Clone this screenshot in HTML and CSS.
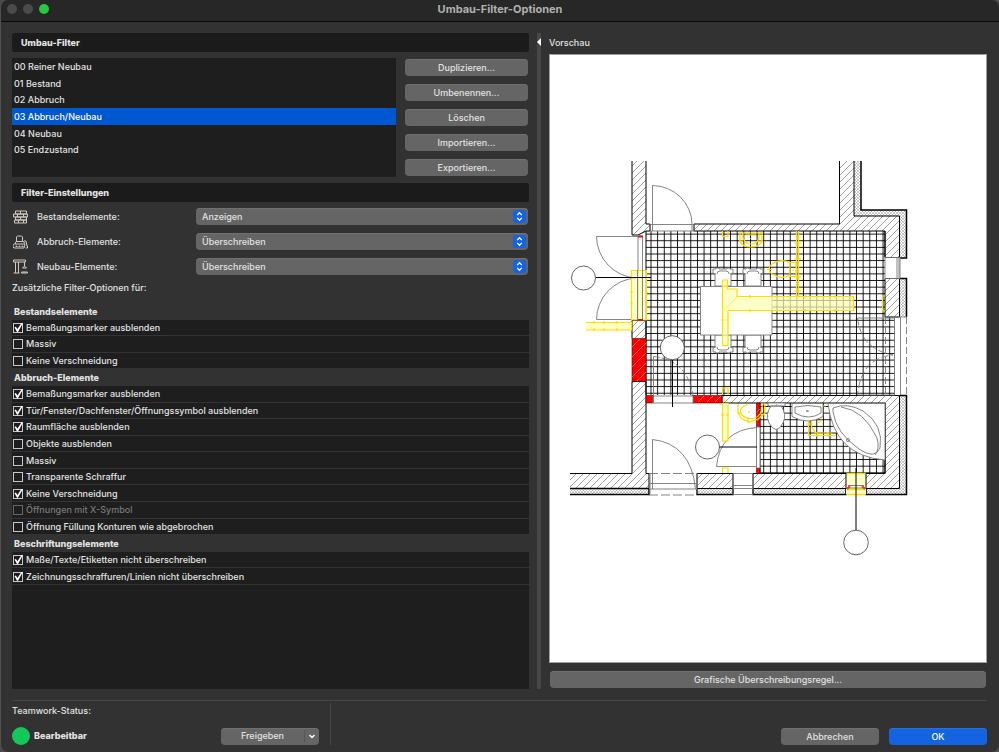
FILE: index.html
```html
<!DOCTYPE html>
<html lang="de">
<head>
<meta charset="utf-8">
<title>Umbau-Filter-Optionen</title>
<link rel="stylesheet" href="styles.css">
</head>
<body>
<div class="window">
  <header class="titlebar">
    <div class="lights"><span class="light"></span><span class="light"></span><span class="light light-zoom"></span></div>
    <h1>Umbau-Filter-Optionen</h1>
  </header>

  <main class="content">
    <section class="settings">
      <h2 class="bar">Umbau-Filter</h2>
      <div class="filters">
        <ul class="filter-list" role="listbox" aria-label="Umbau-Filter">
          <li role="option">00 Reiner Neubau</li>
          <li role="option">01 Bestand</li>
          <li role="option">02 Abbruch</li>
          <li role="option" class="selected" aria-selected="true">03 Abbruch/Neubau</li>
          <li role="option">04 Neubau</li>
          <li role="option">05 Endzustand</li>
        </ul>
        <div class="filter-actions">
          <button class="btn" type="button">Duplizieren...</button>
          <button class="btn" type="button">Umbenennen...</button>
          <button class="btn" type="button">Löschen</button>
          <button class="btn" type="button">Importieren...</button>
          <button class="btn" type="button">Exportieren...</button>
        </div>
      </div>

      <h2 class="bar">Filter-Einstellungen</h2>
      <div class="modes">
        <div class="mode">
          <svg class="mode-icon" viewBox="0 0 16 16" aria-hidden="true"><path d="M2.500 2.500h5v3h-5zM7.500 2.500h6v3h-6zM.5 5.500h4v3h-4zM4.500 5.500h6v3h-6zM10.500 5.500h4v3h-4zM2.500 8.500h5v3h-5zM7.500 8.500h6v3h-6zM1.500 11.500h4v3h-4zM5.500 11.500h5v3h-5zM10.500 11.500h3v3h-3z"/></svg>
          <label for="m1">Bestandselemente:</label>
          <span class="picker"><select id="m1"><option>Anzeigen</option><option>Überschreiben</option></select><svg viewBox="0 0 12 14" aria-hidden="true"><path d="M3.500 5.500L6 3l2.500 2.500M3.500 8.500L6 11l2.500-2.500"/></svg></span>
        </div>
        <div class="mode">
          <svg class="mode-icon" viewBox="0 0 16 16" aria-hidden="true"><path d="M3.500 8V3.500l1-1h4l1 1V8M2 10.500L3 8h7.500l1.500 2.500M1.500 10.500h10l.5 1-1 3h-10l-1-1v-2zM3 13.500v-1h1v1M6 13.500v-1h1v1M9 13.500v-1h1v1M11 7.500h2l1 5h.5v2h-2"/></svg>
          <label for="m2">Abbruch-Elemente:</label>
          <span class="picker"><select id="m2"><option>Überschreiben</option><option>Anzeigen</option></select><svg viewBox="0 0 12 14" aria-hidden="true"><path d="M3.500 5.500L6 3l2.500 2.500M3.500 8.500L6 11l2.500-2.500"/></svg></span>
        </div>
        <div class="mode">
          <svg class="mode-icon" viewBox="0 0 16 16" aria-hidden="true"><path d="M.5 1.500h12v2H.500zM2.500 3.500v11M5.500 3.500v11M.5 14.500h6M11.500 3.500v4M9.500 9.500l2-2 2 2zM8.500 13.500h6v1h-6zM11 13.500v1"/></svg>
          <label for="m3">Neubau-Elemente:</label>
          <span class="picker"><select id="m3"><option>Überschreiben</option><option>Anzeigen</option></select><svg viewBox="0 0 12 14" aria-hidden="true"><path d="M3.500 5.500L6 3l2.500 2.500M3.500 8.500L6 11l2.500-2.500"/></svg></span>
        </div>
      </div>

      <p class="hint">Zusätzliche Filter-Optionen für:</p>
      <div class="tree">
        <div class="tree-rows">
          <h3>Bestandselemente</h3>
          <label><input type="checkbox" checked>Bemaßungsmarker ausblenden</label>
          <label><input type="checkbox">Massiv</label>
          <label><input type="checkbox">Keine Verschneidung</label>
          <h3>Abbruch-Elemente</h3>
          <label><input type="checkbox" checked>Bemaßungsmarker ausblenden</label>
          <label><input type="checkbox" checked>Tür/Fenster/Dachfenster/Öffnungssymbol ausblenden</label>
          <label><input type="checkbox" checked>Raumfläche ausblenden</label>
          <label><input type="checkbox">Objekte ausblenden</label>
          <label><input type="checkbox">Massiv</label>
          <label><input type="checkbox">Transparente Schraffur</label>
          <label><input type="checkbox" checked>Keine Verschneidung</label>
          <label class="off"><input type="checkbox" disabled>Öffnungen mit X-Symbol</label>
          <label><input type="checkbox">Öffnung Füllung Konturen wie abgebrochen</label>
          <h3>Beschriftungselemente</h3>
          <label><input type="checkbox" checked>Maße/Texte/Etiketten nicht überschreiben</label>
          <label><input type="checkbox" checked>Zeichnungsschraffuren/Linien nicht überschreiben</label>
        </div>
      </div>
    </section>

    <div class="splitter" aria-hidden="true"><span class="splitter-arrow"></span></div>

    <section class="preview">
      <h2>Vorschau</h2>
      <div class="canvas">
        <svg viewBox="550 55.500 436 606" role="img" aria-label="Grundriss">
          <defs>
            <pattern id="tiles" patternUnits="userSpaceOnUse" x="647.700" y="230.800" width="6.630" height="6.630"><path d="M3.300 0v6.630M0 3.300h6.630" stroke="#000" stroke-width=".9" fill="none"/></pattern>
            <pattern id="hatch" patternUnits="userSpaceOnUse" width="7" height="7"><path d="M-1 8L8-1M-1 1L1-1M6 8l2-2" stroke="#777" stroke-width=".7" fill="none"/></pattern>
            <pattern id="insul" patternUnits="userSpaceOnUse" width="3" height="3"><path d="M0 0l3 3M3 0L0 3" stroke="#999" stroke-width=".5" fill="none"/></pattern>
            <g id="chair"><path d="M0 2h3V1h3v1h8V1h3v1h3v5h-2v12H2V7H0z" class="w"/><path d="M4 7q0-3 3-3h6q3 0 3 3M0 6l3 1M20 6l-3 1" class="g"/></g>
          </defs>

          <!-- tiled floors -->
          <path d="M646 231H885V317H895V395H646z" fill="url(#tiles)"/>
          <path d="M760 403H885V473H760z" fill="url(#tiles)"/>

          <!-- insulation -->
          <g fill="url(#insul)"><path d="M854 161h7v49h46v48h-7v-42h-46zM900 278h7v39h-7zM900 395h7v99h-41v-5h34zM570 489h79v5h-79zM697 489h36v5h-36zM753 489h93v5h-93z"/></g>
          <!-- masonry -->
          <g class="wall">
            <path d="M632 161V235H638L646 231H650V224H646V161"/>
            <path d="M839.500 161V224H694V231H885V257.500H899.500V216H854V161"/>
            <path d="M885 278.500h14.500V317H885z"/>
            <path d="M632 338.500V320.500H646V338.500"/>
            <path d="M570 473.500H632V381.500H646V473.500H649V488.500H570"/>
            <path d="M722 395.500H899.500V488.500H866V473.500H885V403H722z"/>
            <path d="M697 473.500h36v15h-36zM753 473.500h93v15h-93z"/>
          </g>
          <g class="k2"><path d="M861 161V210H906.500V258H900M900 278.500H906.500V317M900 395.500H906.500V494.500H866V489M570 494.500H649V489M570 488.500H649M697 489v5.500h36V489M753 489v5.500h93V489"/></g>
          <path class="k" d="M646 231v164M885 231v26M885 403v70.500M760 403v70"/>

          <!-- new walls -->
          <g class="red"><path d="M632 338.500h14v43h-14zM646 395.500h7v7.500h-7zM692 395.500h30v7.500h-30zM756.500 403h3.500v24h-3.500zM756.500 468h3.500v5.500h-3.500z"/></g>
          <path d="M632 347l8-8M632 357l14-14M632 367l14-14M632 377l14-14M637 381l9-9M698 402l6-6M707 402l6-6M715 402l6-6M757 412l3-3M757 421l3-3" stroke="#c77" stroke-width=".9"/>

          <!-- table and chairs -->
          <use href="#chair" x="713" y="267"/><use href="#chair" x="743" y="267"/>
          <use href="#chair" transform="translate(733 354) rotate(180)"/><use href="#chair" transform="translate(763 354) rotate(180)"/>
          <path class="w" d="M700.500 286.500h71.500V335h-71.500z"/>

          <!-- doors and windows -->
          <g class="g">
            <path d="M652.500 231V185.500A40 39 0 0 1 692 224V231M650.500 224v7M694 224v7M650 224.500h44M650 231h44"/>
            <path d="M638 236.500H596.500A42 42 0 0 0 636 278A42 42 0 0 0 596.500 319.500H638"/>
            <path class="w" d="M638 236h4.500v84H638z"/>
            <path d="M885 257.500h15v21h-15zM897 258v20M899 258v20"/>
            <path d="M894.500 317v78M900.500 317v78M885 317h22M857.500 318H895M857.500 395H895"/>
            <path stroke-dasharray="7 3" d="M906.500 317v78M885.500 317v78M857.500 318Q861 349 893 355Q861 358 857.500 395"/>
            <path d="M652.500 473V439.500Q691 444 695.500 489M649 483.500h48M649 489h48M650 473v21M697 473v21M652.500 473v16"/>
            <path stroke-dasharray="9 3" d="M649 473.500h48M649 495h48"/>
            <path class="w" d="M653 396h40v7h-40z"/>
            <path d="M653.500 403V356.500"/>
            <path stroke-dasharray="6 2" d="M653.500 356.500Q687 360 693 395"/>
            <path d="M733 473.500h20v21h-20zM733 485.500h20M733 488.500h20"/>
            <path class="w" d="M756.500 427h3.500v41h-3.500zM757 427.500Q720 430 716.500 466.500H757"/>
          </g>

          <!-- demolished parts -->
          <g class="y">
            <path class="yf" d="M631.500 270.500h15v49.500h-15zM586 322.500h45.500v7.500H586"/>
            <path class="yf" d="M722.500 280h5v9H737v7.500H853.500v14H728v35h-5.500zM722.500 403.500h5.500v37.500h-5.500z"/>
            <path d="M722.500 395v-7h5.500v7M885 296h-2.500v15h2.500"/>
            <path d="M722.500 231v5.500h5.500V231M722.500 473v-5h5.500v5"/>
            <path stroke-width=".6" d="M724 310L737 297"/>
            <path d="M796.500 231v65M798.500 231v65M794 243h7M794 259h7M794 277h7M794 291h7"/>
            <path d="M740 232v9q2 6 11 6t11-6v-9M743 233v5q2 6 8 6t8-6v-5M740 233h23M743 241h-4M763 241h-4M751 238v1M746 235h10"/>
            <path d="M790 262.500v14h6v-14zM790 263q-9-5-18 1-6 5 0 10 9 6 18 1M767 269.500h5M794 270h-2"/>
            <path d="M738 404v9l4 6 8 3 8-3 7-6v-9h-4M748 404q-10 4-7 10 5 6 14 4 8-4 7-13M749 411v2M737 413h5M748 419v4"/>
            <path d="M808.500 421v14.500H836M811.500 421v6l4 6H832M806 424h7M817 432v5M828 432v5M822 420l-4 3M826 406h-4"/>
            <path d="M594 321v3M604 321v3M617 321v3M594 328v3M604 328v3M617 328v3M630 292h3M630 303h3M645 292h3M645 303h3M750 295v3M777 295v3M805 295v3M835 295v3M750 309v3M777 309v3M805 309v3M835 309v3M721 320h3M726 320h3M721 415h3M726 415h3"/>
          </g>
          <path class="g" d="M637.500 270v50M642.500 270v50"/>
          <path fill="#e01020" d="M638 235.500h5v2h-5zM638 319h5v2h-5z"/>

          <!-- bathroom fixtures -->
          <g class="g">
            <path class="w" d="M768 403h17v3h-17zM771 406q-6 8-2 17 7 13 14 0 4-9-2-17z"/><path d="M776 405h1"/>
            <path class="w" d="M792 403.500h31v13q-15 9-31 0z"/><path d="M795 407q13-3 26 0v6q-12 8-26 0zM807 410v2M806 411h3"/>
            <path class="w" d="M828 403.500H885V460Q834 456 828 403.500z"/>
            <path d="M833 408Q847 402 863 411 884 425 880 448 875 460 859 449 836 433 833 412zM841 407Q864 410 877 438 880 449 875 455M844 420"/><circle cx="848" cy="440" r="1.500"/>
          </g>
          <!-- lower right window -->
          <path fill="#ffffc8" d="M846 473.500h20v21h-20z"/>
          <path d="M846 473.500h20M847 489.500h18M847 494.500h18" stroke="#fd0" stroke-width="1.500"/>
          <path class="g" d="M846.500 473v16M865.500 473v16M848 485.500h16M848 488h16"/>
          <path d="M847 489l3-3M865 489l-3-3" stroke="#e33" stroke-width="2"/>

          <!-- markers -->
          <g fill="#fff" stroke="#555" stroke-width=".9"><circle cx="583.500" cy="278" r="12"/><circle cx="672.300" cy="347.700" r="12"/><circle cx="707.500" cy="447" r="12"/><circle cx="856" cy="542.500" r="12.300"/></g>
          <path class="k" d="M596 277.500h55M672.500 360v47M719.500 447H757M856 468v62"/>
        </svg>
      </div>
      <button class="btn" type="button">Grafische Überschreibungsregel...</button>
    </section>
  </main>

  <footer class="footer">
    <div class="team">
      <p>Teamwork-Status:</p>
      <div class="team-row">
        <span class="status"><span class="dot"></span>Bearbeitbar</span>
        <button class="btn release" type="button"><span>Freigeben</span><svg viewBox="0 0 14 12" aria-hidden="true"><path d="M4.500 5L7 7.500 9.500 5"/></svg></button>
      </div>
    </div>
    <div class="dialog-actions">
      <button class="btn" type="button">Abbrechen</button>
      <button class="btn primary" type="button">OK</button>
    </div>
  </footer>
</div>
</body>
</html>
```

FILE: styles.css
```css
* { box-sizing: border-box; margin: 0; padding: 0; }

body {
  background: #4b4b4b;
  color: #e2e2e2;
  font: 500 9px/16px Inter, "Liberation Sans", sans-serif;
}

button, select { font: inherit; color: inherit; }

.window {
  display: flex;
  flex-direction: column;
  min-height: 100vh;
  background: #323232;
  border-left: 1px solid #505050;
  border-radius: 8px;
}

.titlebar {
  position: relative;
  height: 22px;
  background: #272727;
  border-bottom: 1px solid #080808;
  border-radius: 8px 8px 0 0;
}
.titlebar h1 {
  font-size: 11px;
  font-weight: 700;
  line-height: 18px;
  text-align: center;
  color: #b0b0b0;
}
.lights { position: absolute; top: 4px; left: 6px; display: flex; gap: 6px; }
.light { width: 10px; height: 10px; border-radius: 50%; background: #4b4b4b; }
.light-zoom { background: #28c840; }

.content {
  flex: 1;
  display: grid;
  grid-template-columns: minmax(0, 517fr) 4px minmax(0, 438fr);
  gap: 8px;
  padding: 11px 12px 11px 11px;
}

.settings { display: flex; flex-direction: column; }
.bar {
  height: 19px;
  padding-left: 9px;
  background: #1b1b1b;
  border-radius: 2px;
  font-size: 9px;
  font-weight: 800;
  line-height: 19px;
}

.filters {
  display: grid;
  grid-template-columns: minmax(0, 1fr) 123px;
  gap: 9px;
  padding: 6px 1px 6px 0;
}
.filter-list {
  display: grid;
  grid-template-rows: repeat(6, minmax(0, 1fr));
  padding-bottom: 19px;
  height: 119px;
  background: #1e1e1e;
  line-height: 18px;
  list-style: none;
}
.filter-list li { padding-left: 2px; }
.filter-list .selected { background: #0058d0; color: #fff; }
.filter-actions { display: flex; flex-direction: column; gap: 8px; padding-top: 1px; }

.btn {
  height: 17px;
  border: 0;
  border-radius: 4px;
  background: #656565;
  box-shadow: inset 0 1px #707070;
  line-height: 16px;
  text-align: center;
}

.modes { display: flex; flex-direction: column; gap: 8px; padding: 6px 1px 0 0; }
.mode { display: grid; grid-template-columns: 25px 159px 1fr; align-items: center; }
.mode-icon {
  width: 17px;
  height: 17px;
  padding-left: 1px;
  fill: none;
  stroke: #d3c8bf;
  stroke-width: 1;
}
.picker { position: relative; display: block; height: 17px; }
.picker select {
  display: block;
  width: 100%;
  height: 17px;
  padding: 0 20px 0 6px;
  appearance: none;
  border: 0;
  border-radius: 4px;
  background: #656565;
  box-shadow: inset 0 1px #707070;
  line-height: 16px;
}
.picker svg {
  position: absolute;
  top: 2px;
  right: 2px;
  width: 13px;
  height: 13px;
  border-radius: 3px;
  background: #1463e0;
  fill: none;
  stroke: #fff;
  stroke-width: 1.400;
  pointer-events: none;
}

.hint { margin: 5px 0 7px; }

.tree { flex: 1; background: #1e1e1e; }
.tree-rows {
  display: grid;
  grid-template-rows: repeat(17, minmax(0, 1fr));
  height: 282px;
}
.tree-rows h3 {
  padding-left: 2px;
  background: #323232;
  font-size: 9px;
  font-weight: 800;
  line-height: 17px;
}
.tree-rows label {
  display: flex;
  align-items: center;
  gap: 3px;
  padding: 1px 0 0 1px;
  border-bottom: 1px solid #333;
}
.tree-rows .off { color: #7a7a7a; }
.tree-rows input {
  position: relative;
  width: 10px;
  height: 10px;
  appearance: none;
  border: 1px solid #c8c8c8;
}
.tree-rows input:disabled { border-color: #666; }
.tree-rows input:checked::after {
  content: "";
  position: absolute;
  inset: -1px;
  background: #fff;
  clip-path: polygon(15% 45%, 28% 38%, 45% 62%, 85% 0, 100% 0, 50% 90%, 40% 90%);
}

.splitter { position: relative; background: #474747; }
.splitter-arrow {
  position: absolute;
  top: 5px;
  left: 0;
  border: 4px solid transparent;
  border-left-width: 0;
  border-right-color: #fff;
}

.preview { display: flex; flex-direction: column; }
.preview h2 { padding-bottom: 1px; font-size: 9px; font-weight: 500; line-height: 20px; }
.canvas { flex: 1; display: flex; min-height: 0; background: #fff; border: 1px solid #a0a0a0; }
.canvas svg { flex: 1; width: 100%; height: auto; min-height: 0; }
.preview .btn { margin: 8px 1px 1px; }

.wall { fill: url(#hatch); stroke: #000; stroke-width: 1; }
.k { fill: none; stroke: #000; stroke-width: 1; }
.k2 { fill: none; stroke: #000; stroke-width: 1.500; }
.g { fill: none; stroke: #777; stroke-width: .9; }
.w { fill: #fff; stroke: #777; stroke-width: .9; }
.red { fill: #f00; stroke: #500; stroke-width: .6; }
.y { fill: none; stroke: #fd0; stroke-width: 1.200; }
.yf { fill: #ffffb0; fill-opacity: .7; }

.footer {
  display: flex;
  justify-content: space-between;
  margin: 0 12px 0 11px;
  padding: 2px 0 7px;
  border-top: 1px solid #474747;
}
.team { width: 319px; padding-right: 11px; border-right: 1px solid #474747; }
.team-row { display: flex; justify-content: space-between; align-items: center; margin-top: 8px; }
.status { display: flex; align-items: center; gap: 4px; font-weight: 800; }
.dot { width: 18px; height: 18px; border-radius: 50%; background: #12c958; }
.release { display: flex; align-items: center; width: 98px; }
.release span { flex: 1; }
.release svg {
  width: 15px;
  height: 12px;
  border-left: 1px solid #555;
  fill: none;
  stroke: #fff;
  stroke-width: 1.500;
}
.dialog-actions { display: flex; align-items: flex-end; gap: 10px; }
.dialog-actions .btn { width: 98px; }
.dialog-actions .primary { background: #1463e0; box-shadow: inset 0 1px #2470e8; color: #fff; }
```
